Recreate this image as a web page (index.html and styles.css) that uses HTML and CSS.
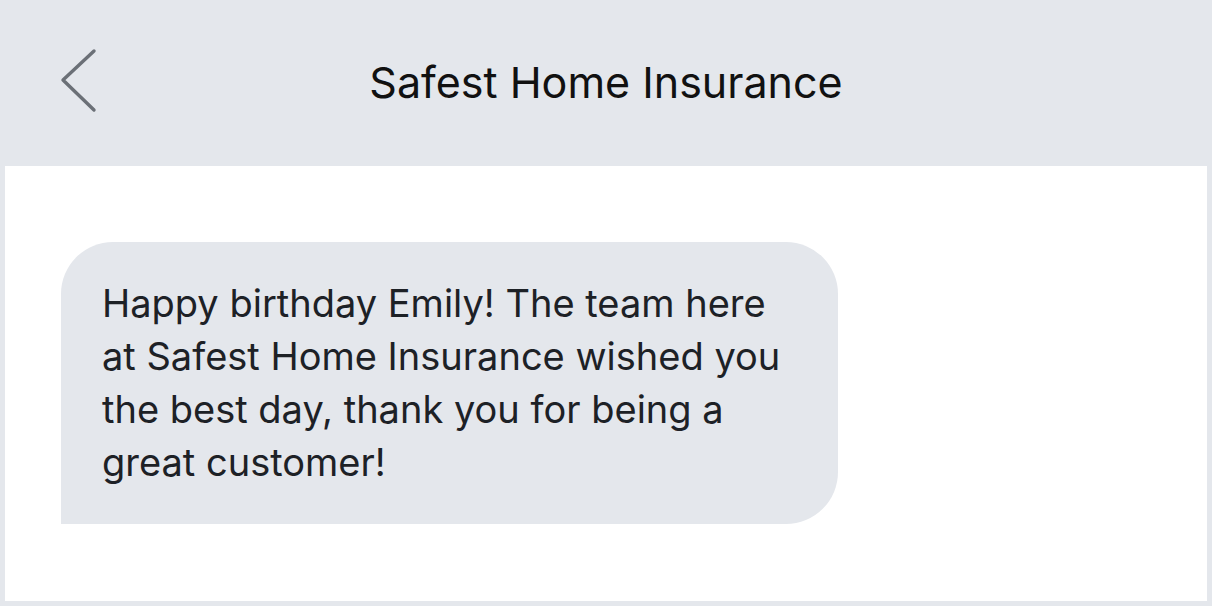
FILE: index.html
```html
<!DOCTYPE html>
<html lang="en">
<head>
<meta charset="UTF-8">
<meta name="viewport" content="width=device-width, initial-scale=1.0">
<title>Safest Home Insurance</title>
<link rel="stylesheet" href="styles.css">
</head>
<body>

<div class="header">
  <a class="back" href="#">
    <svg width="40" height="66" viewBox="0 0 40 66">
      <polyline points="34,4 3,33 34,63" fill="none" stroke="#6b7077" stroke-width="3.4" stroke-linecap="round" stroke-linejoin="round"/>
    </svg>
  </a>
  <h1 class="title">Safest Home Insurance</h1>
</div>

<div class="thread">
  <div class="bubble">
    Happy birthday Emily! The team here at Safest Home Insurance wished you the best day, thank you for being a great customer!
  </div>
</div>

</body>
</html>
```

FILE: styles.css
```css
* {
  box-sizing: border-box;
}

body {
  margin: 0;
  height: 606px;
  background: #e4e7ec;
  font-family: Inter, "Liberation Sans", sans-serif;
  display: flex;
  flex-direction: column;
  padding: 0 5px 5px;
}

.header {
  height: 166px;
  flex-shrink: 0;
  display: flex;
  align-items: center;
  justify-content: center;
  position: relative;
}

.back {
  position: absolute;
  left: 55px;
  top: 47px;
  display: block;
}

.back svg {
  display: block;
}

.title {
  margin: 0 0 2px 0;
  font-size: 43px;
  font-weight: normal;
  color: #111;
}

.thread {
  flex: 1;
  background: #fff;
  padding: 76px 56px;
}

.bubble {
  width: 777px;
  height: 282px;
  background: #e4e7ec;
  border-radius: 52px 52px 52px 0;
  padding: 35px 38px 0 41px;
  font-size: 38px;
  line-height: 53px;
  color: #1d2126;
}
```
